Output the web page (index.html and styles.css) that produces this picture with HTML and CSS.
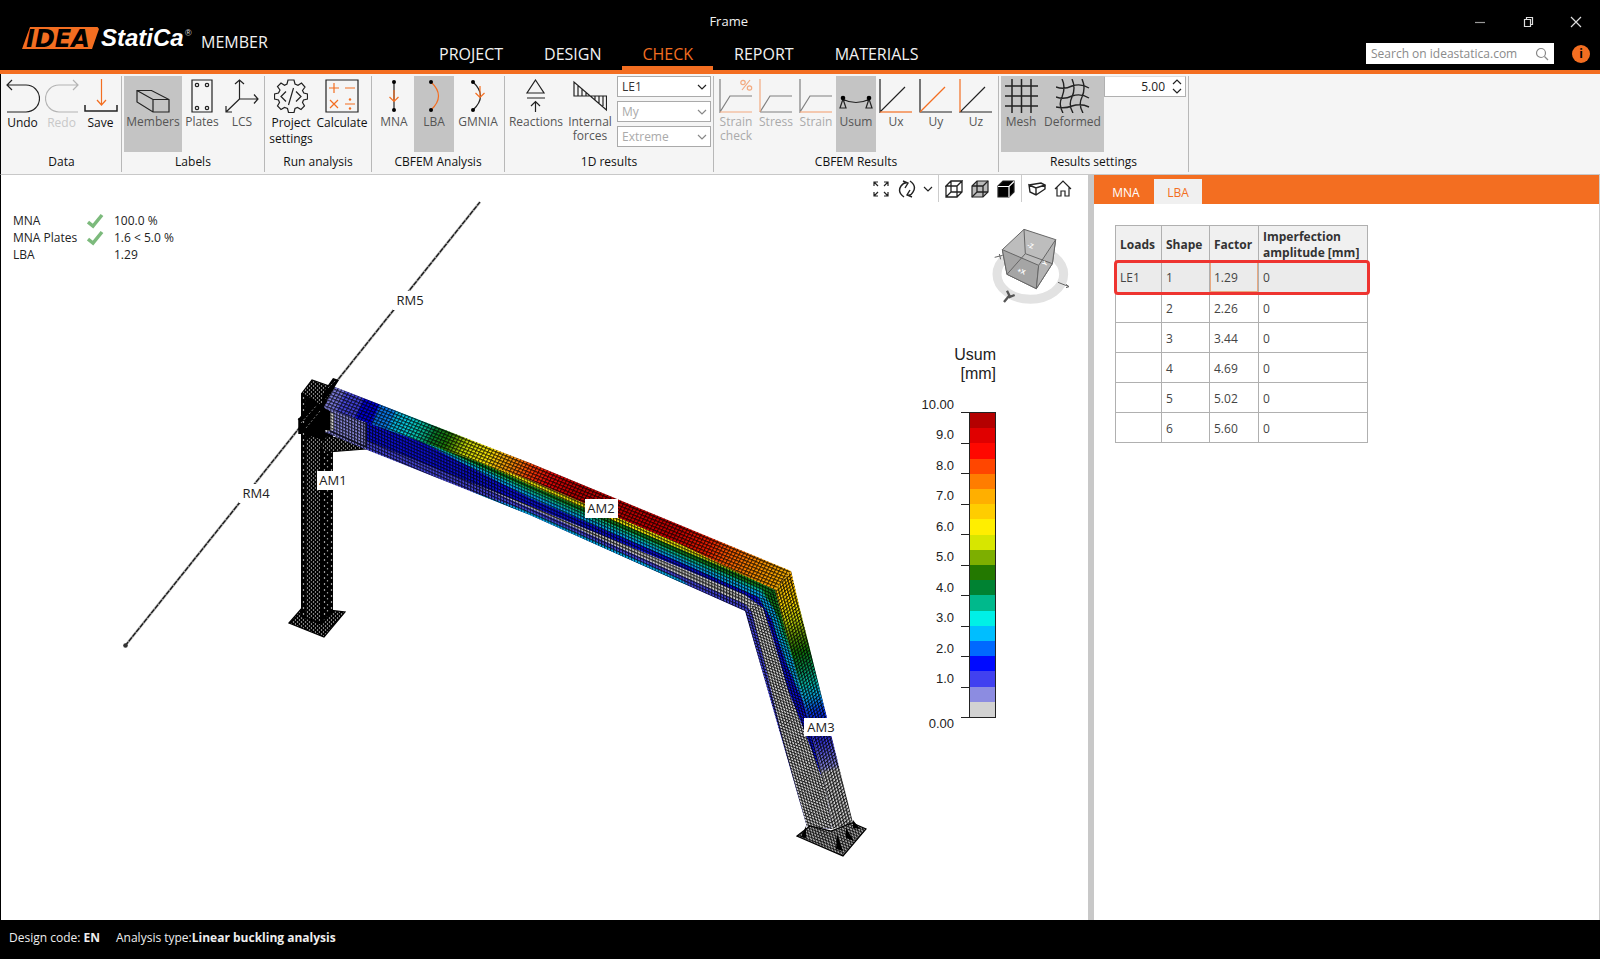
FILE: index.html
```html
<!DOCTYPE html>
<html lang="en">
<head>
<meta charset="utf-8">
<meta name="viewport" content="width=device-width, initial-scale=1">
<title>IDEA StatiCa Member - Frame</title>
<link rel="stylesheet" href="styles.css">
</head>
<body>
<div class="app">
  <header class="header">
    <div class="brand">
      <svg class="logo" width="172" height="26" viewBox="0 0 172 26" role="img" aria-label="IDEA StatiCa">
        <path class="logo-plate" d="M8 2H75.500L77 4L70 24H0Z"/>
        <text class="logo-idea" x="4" y="21.500">IDEA</text>
        <text class="logo-name" x="79" y="21">StatiCa</text>
        <text class="logo-reg" x="163" y="11">®</text>
      </svg>
      <span class="product">MEMBER</span>
    </div>
    <div class="header-mid">
      <div class="title">Frame</div>
      <nav class="menu">
        <a href="#project">PROJECT</a>
        <a href="#design">DESIGN</a>
        <a href="#check" class="active">CHECK</a>
        <a href="#report">REPORT</a>
        <a href="#materials">MATERIALS</a>
      </nav>
    </div>
    <div class="header-end">
      <div class="window-buttons">
        <button aria-label="Minimize"><svg width="12" height="12"><path d="M1 6.500H11" stroke="#999"/></svg></button>
        <button aria-label="Restore"><svg width="12" height="12"><path d="M2.500 3.500H8.500V10.500H2.500ZM4.500 3V1.500H10.500V8.500H9"/></svg></button>
        <button aria-label="Close"><svg width="12" height="12"><path d="M1 1L11 11M11 1L1 11"/></svg></button>
      </div>
      <div class="search-row">
        <label class="search">
          <input type="text" aria-label="Search" placeholder="Search on ideastatica.com">
          <svg width="14" height="14"><circle cx="6" cy="6" r="4.500"/><path d="M9.500 9.500L13 13"/></svg>
        </label>
        <button class="info" aria-label="Information">i</button>
      </div>
    </div>
  </header>

  <section class="ribbon">
    <div class="group">
      <div class="tools">
        <button class="tool w39 dark"><svg class="ic"><path d="M6 1L1 6L6 11M1 6H20A13.500 13.500 0 0 1 20 33H1"/></svg>Undo</button>
        <button class="tool w39 dark off" disabled><svg class="ic"><path d="M28 1L33 6L28 11M33 6H14A13.500 13.500 0 0 0 14 33H33"/></svg>Redo</button>
        <button class="tool w39 dark"><svg class="ic"><path class="or" d="M17.500 0V26M13 21L17.500 26L22 21"/><path d="M1 26V32H33V26" stroke-width="1.500"/></svg>Save</button>
      </div>
      <h2 class="low">Data</h2>
    </div>
    <div class="group">
      <div class="tools">
        <button class="tool w58 on"><svg class="ic"><path d="M1 11.500H15.500L33 20.500V33H17L1 23ZM1 11.500L17 20.500H33M17 20.500V33"/></svg>Members</button>
        <button class="tool w40"><svg class="ic"><path d="M7 1H27V33H7Z"/><circle cx="12" cy="6" r="1.700"/><circle cx="22" cy="6" r="1.700"/><circle cx="12" cy="29" r="1.700"/><circle cx="22" cy="29" r="1.700"/></svg>Plates</button>
        <button class="tool w40"><svg class="ic"><path d="M14.500 1V20H33M14.500 20L1 33M10 5L14.500 1L19 5M29 15.500L33 20L29 24.500M1 27V33H7"/></svg>LCS</button>
      </div>
      <h2>Labels</h2>
    </div>
    <div class="group">
      <div class="tools">
        <button class="tool w48 dark tall"><svg class="ic"><path d="M14 1H20L21 5L24 6.300L27.500 4L31 8L28.500 11.500L29.800 14L33.500 15V20L29.500 21L28.500 23.500L30.500 27L27 30.500L23.500 28.500L21 29.500L20 33.500H14.500L13.500 29.500L10.500 28.500L7 30.500L3.500 27L5.500 23.500L4.500 21L0.500 20V15L4.500 14L6 11L3.500 7.500L7 4L10.500 6.300L13 5Z"/><path d="M12 12.500L7 17.500L12 22.500M22 12.500L27 17.500L22 22.500M19.500 9L14.500 26"/></svg>Project settings</button>
        <button class="tool w54 dark"><svg class="ic"><path d="M1 1H33V33H1Z"/><path class="or" d="M4 9H14M9 4V14M20 9H30M5 21L13 29M13 21L5 29M20 25H30"/><circle class="of" cx="25" cy="20.500" r="1.200"/><circle class="of" cx="25" cy="29.500" r="1.200"/></svg>Calculate</button>
      </div>
      <h2>Run analysis</h2>
    </div>
    <div class="group">
      <div class="tools">
        <button class="tool w40"><svg class="ic"><path d="M17 3V31"/><circle class="bf" cx="17" cy="3" r="2"/><circle class="bf" cx="17" cy="31" r="2"/><path class="or" d="M17 11V22M12.500 18L17 22.500L21.500 18"/></svg>MNA</button>
        <button class="tool w40 on"><svg class="ic"><path class="or" d="M14 3Q29 17 14 31"/><circle class="bf" cx="14" cy="3" r="2"/><circle class="bf" cx="14" cy="31" r="2"/></svg>LBA</button>
        <button class="tool w48"><svg class="ic"><path d="M12 3Q27 17 12 31"/><circle class="bf" cx="12" cy="3" r="2"/><circle class="bf" cx="12" cy="31" r="2"/><path class="or" d="M19 7V18M14.500 14L19 18.500L23.500 14"/></svg>GMNIA</button>
      </div>
      <h2>CBFEM Analysis</h2>
    </div>
    <div class="group">
      <div class="tools">
        <button class="tool w58"><svg class="ic"><path d="M16.500 1L25 14H8ZM8 19H26M16.500 33V22.500M12 27L16.500 22.500L21 27"/></svg>Reactions</button>
        <button class="tool w50"><svg class="ic"><path d="M1 3V17H33.500V31L1 3ZM5 7V17M9 10V17M13 13V17M22 17V21M26 17V24M30 17V27"/></svg>Internal forces</button>
        <div class="selects">
          <label class="pick"><select aria-label="Load"><option>LE1</option></select><svg width="10" height="6"><path d="M1 1L5 5L9 1"/></svg></label>
          <label class="pick"><select aria-label="Component" disabled><option>My</option></select><svg width="10" height="6"><path d="M1 1L5 5L9 1"/></svg></label>
          <label class="pick"><select aria-label="Range" disabled><option>Extreme</option></select><svg width="10" height="6"><path d="M1 1L5 5L9 1"/></svg></label>
        </div>
      </div>
      <h2>1D results</h2>
    </div>
    <div class="group">
      <div class="tools">
        <button class="tool w40 dim" disabled><svg class="ic"><path d="M1 0V33L11 17H33"/><path class="or" d="M1 33H33M23 11L31 1"/><circle class="or" cx="24" cy="3.500" r="2.200"/><circle class="or" cx="30.500" cy="9" r="2.200"/></svg>Strain check</button>
        <button class="tool w40 dim" disabled><svg class="ic"><path d="M1 33H33M1 33L11 17H33"/><path class="or" d="M1 0V33"/></svg>Stress</button>
        <button class="tool w40 dim" disabled><svg class="ic"><path d="M1 0V33L11 17H33"/><path class="or" d="M1 33H33"/></svg>Strain</button>
        <button class="tool w40 on"><svg class="ic"><path d="M3 20Q17 27 31 20M4 20L1 29H7L4 20M30 20L27 29H33L30 20"/><circle class="bf" cx="4" cy="19" r="2.300"/><circle class="bf" cx="30" cy="19" r="2.300"/></svg>Usum</button>
        <button class="tool w40"><svg class="ic"><path d="M1 0V33L26 8"/><path class="or" d="M1 33H33"/></svg>Ux</button>
        <button class="tool w40"><svg class="ic"><path d="M1 0V33H33"/><path class="or" d="M1 33L26 8"/></svg>Uy</button>
        <button class="tool w40"><svg class="ic"><path d="M33 33H1L26 8"/><path class="or" d="M1 0V33"/></svg>Uz</button>
      </div>
      <h2>CBFEM Results</h2>
    </div>
    <div class="group">
      <div class="tools">
        <button class="tool w40 on"><svg class="ic"><path d="M8 0V34M17.500 0V34M27 0V34M1 7H34M1 17H34M1 27H34" stroke-width="1.500"/></svg>Mesh</button>
        <button class="tool w63 on"><svg class="ic"><path d="M6 0Q10 8 6 18Q2 26 7 34M16 0Q20 9 16 18Q12 26 17 34M26 0Q30 9 26 18Q22 26 27 34M0 8Q8 11 16 7Q25 4 33 9M0 18Q8 21 16 17Q25 14 33 19M0 28Q8 30 16 27Q25 24 33 28" stroke-width="1.400"/></svg>Deformed</button>
        <div class="spin">
          <input type="text" value="5.00" aria-label="Deformation scale">
          <div class="steps">
            <button aria-label="Increase"><svg width="10" height="6"><path d="M1 5L5 1L9 5"/></svg></button>
            <button aria-label="Decrease"><svg width="10" height="6"><path d="M1 1L5 5L9 1"/></svg></button>
          </div>
        </div>
      </div>
      <h2>Results settings</h2>
    </div>
  </section>

  <main class="work">
    <section class="canvas">
      <svg class="scene" aria-label="Deformed frame model">
        <defs>
          <linearGradient id="top" gradientUnits="userSpaceOnUse" x1="326" y1="395" x2="785" y2="583">
            <stop offset="0" stop-color="#8888e0"/><stop offset=".03" stop-color="#7070dc"/>
            <stop offset=".035" stop-color="#4a4ae0"/><stop offset=".07" stop-color="#4040dd"/>
            <stop offset=".075" stop-color="#0000dd"/><stop offset=".105" stop-color="#0000e0"/>
            <stop offset=".11" stop-color="#0a74f0"/><stop offset=".14" stop-color="#0a84f0"/>
            <stop offset=".145" stop-color="#08b8e8"/><stop offset=".175" stop-color="#08d0e0"/>
            <stop offset=".20" stop-color="#08c8b0"/><stop offset=".22" stop-color="#08a070"/>
            <stop offset=".23" stop-color="#088030"/><stop offset=".26" stop-color="#208008"/>
            <stop offset=".28" stop-color="#70a808"/><stop offset=".30" stop-color="#d0e008"/>
            <stop offset=".35" stop-color="#ffe808"/><stop offset=".38" stop-color="#ffb008"/>
            <stop offset=".41" stop-color="#ff8008"/><stop offset=".44" stop-color="#ff4008"/>
            <stop offset=".48" stop-color="#e80808"/><stop offset=".54" stop-color="#c00000"/>
            <stop offset=".76" stop-color="#c80000"/><stop offset=".83" stop-color="#f02000"/>
            <stop offset=".87" stop-color="#ff5800"/><stop offset=".93" stop-color="#ff8c00"/>
            <stop offset="1" stop-color="#ffb400"/>
          </linearGradient>
          <linearGradient id="side" gradientUnits="userSpaceOnUse" x1="783" y1="575" x2="840" y2="800">
            <stop offset="0" stop-color="#ffb000"/><stop offset=".12" stop-color="#ffd800"/>
            <stop offset=".2" stop-color="#c8d808"/><stop offset=".27" stop-color="#609808"/>
            <stop offset=".34" stop-color="#107808"/><stop offset=".41" stop-color="#089050"/>
            <stop offset=".48" stop-color="#08c0b0"/><stop offset=".54" stop-color="#08a8e8"/>
            <stop offset=".6" stop-color="#0840f0"/><stop offset=".68" stop-color="#1010e0"/>
            <stop offset=".76" stop-color="#4848e0"/><stop offset=".85" stop-color="#8c8ce4"/>
            <stop offset=".87" stop-color="#d0d0d0"/><stop offset="1" stop-color="#d0d0d0"/>
          </linearGradient>
          <pattern id="m1" width="3.600" height="3.200" patternUnits="userSpaceOnUse" patternTransform="matrix(.93 .38 -.5 .86 0 0)"><path d="M0 .5H3.600M.5 0V3.200" stroke="#000" stroke-opacity=".78"/></pattern>
          <pattern id="m2" width="3.200" height="3.200" patternUnits="userSpaceOnUse" patternTransform="matrix(.93 .41 0 1 0 0)"><path d="M0 .5H3.200M.5 0V3.200" stroke="#000" stroke-opacity=".78"/></pattern>
          <pattern id="m3" width="3.200" height="3.200" patternUnits="userSpaceOnUse" patternTransform="matrix(.26 .97 .93 .36 0 0)"><path d="M0 .5H3.200M.5 0V3.200" stroke="#000" stroke-width="1.200" stroke-opacity=".85"/></pattern>
          <pattern id="m4" width="3.200" height="3.200" patternUnits="userSpaceOnUse" patternTransform="matrix(.26 .97 .75 -.66 0 0)"><path d="M0 .5H3.200M.5 0V3.200" stroke="#000" stroke-width="1.200" stroke-opacity=".85"/></pattern>
          <pattern id="dots" width="4" height="4" patternUnits="userSpaceOnUse"><rect width="4" height="4"/><path d="M1.500 1V3M3.500 3V4M3.500 0V1" stroke="#808080"/></pattern>
          <pattern id="sparse" width="7" height="6" patternUnits="userSpaceOnUse"><rect width="7" height="6"/><path d="M2.500 1V3M5.500 4V5.500" stroke="#999"/></pattern>
        </defs>
        <g transform="translate(-1 -175)">
          <path d="M125 646L480 202" stroke="#aaa" stroke-width="2.500"/>
          <path d="M125 646L480 202" stroke="#111" stroke-width="1.200" stroke-dasharray="5 1"/>
          <circle cx="125.500" cy="645.500" r="2.300" fill="#333"/>
          <!-- left column AM1 -->
          <path d="M289 623L303 607L345 612L324 637Z" fill="url(#dots)" stroke="#000"/>
          <path d="M301 393L323 405L333 400V612L322 625L301 617Z" fill="#000"/>
          <path d="M301 393L306 395V616L301 614Z" fill="url(#sparse)"/>
          <path d="M306 440H320V622L306 617Z" fill="url(#dots)"/>
          <path d="M322 440H333V610L322 622Z" fill="url(#sparse)"/>
          <path d="M302 393L312 380L335 388L323 407Z" fill="url(#dots)" stroke="#000"/>
          <path d="M306 441L312 436L330 443L326 450Z" fill="url(#dots)"/>
          <path d="M326 436L366 443V449L328 452L320 449Z" fill="url(#dots)" stroke="#000" stroke-width="1"/>
          <!-- rafter AM2 web and bottom flange -->
          <path d="M325 405L530 480L680 544L775 590L779 605L793 660L808 720L827 793L832 829L807 827L745 611L680 582L530 515L365 449L325 432Z" fill="#4646de"/>
          <path d="M325 405L366 421V449L325 432Z" fill="#8888dc"/>
          <path d="M329 412L334 414V430L325 432Z" fill="#ddd"/>
          <path d="M470 482L530 505L680 567L745 594L768 606L792 673L813 740L827 793L832 829L807 827L783 740L767 673L752 612L745 604L680 575L560 521Z" fill="#d0d0d0"/>
          <path d="M366 420L530 480L680 544L775 590L793 660L808 720L822 778L806 735L788 690L772 635L763 608L745 595L680 567L530 506L366 440Z" fill="#0c10d8"/>
          <path d="M410 436L530 480L680 544L775 590L793 660L803 702L785 660L771 618L758 597L680 562L530 498Z" fill="#08a8ec"/>
          <path d="M425 442L530 480L680 544L775 590L793 660L780 632L774 608L760 592L680 558L530 493Z" fill="#08b898"/>
          <path d="M435 446L530 480L680 544L775 590L790 648L779 618L762 589L680 554L530 489Z" fill="#108020"/>
          <path d="M470 458L530 480L680 544L772 588L680 549L530 485Z" fill="#f0e808"/>
          <path d="M470 491L530 515L680 582L690 586L680 579L530 512Z" fill="#08b0ec"/>
          <path d="M325 405L530 480L680 544L775 590L745 611L680 582L530 515L365 449L325 432Z" fill="url(#m2)"/>
          <path d="M775 590L779 605L793 660L808 720L827 793L832 829L807 827L745 611Z" fill="url(#m3)"/>
          <path d="M366 440L530 506L745 600" fill="none" stroke="#000" stroke-opacity=".35"/>
          <path d="M366 421V447M330 431L366 447" fill="none" stroke="#112" stroke-width="1.500"/>
          <!-- top flange -->
          <path d="M335 387L530 463L791 571L775 590L680 544L530 480L323 407Z" fill="url(#top)"/>
          <path d="M335 387L530 463L791 571L775 590L680 544L530 480L323 407Z" fill="url(#m1)"/>
          <!-- right column AM3 outer flange -->
          <path d="M791 571L799 605L853 823L832 829L827 793L808 720L793 660L779 605L775 590Z" fill="url(#side)"/>
          <path d="M791 571L799 605L853 823L832 829L827 793L808 720L793 660L779 605L775 590Z" fill="url(#m4)"/>
          <path d="M797 836L810 826L831 831L852 823L866 829L843 856Z" fill="#aaa"/>
          <path d="M797 836L810 826L831 831L852 823L866 829L843 856Z" fill="url(#m3)" stroke="#000"/>
          <path d="M806 826V838L801 837ZM837 834L843 851L836 849ZM846 828L854 841L846 838ZM853 820L860 829L853 828Z"/>
          <!-- joint between purlin and column -->
          <path d="M326 388L333 378L339 380L331 393L324 400L324 408L330 411V430H322V398Z" fill="#000"/>
          <path d="M299 421L316 401M301 430L320 408M304 433L326 400M300 418V434" stroke="#000" stroke-width="3.500"/>
          <path d="M301 423L317 405M306 428L320 411M328 388L336 380" stroke="#777" stroke-width="1" stroke-dasharray="2 2"/>
          <!-- member labels -->
          <g class="tags">
            <rect x="239" y="484" width="34" height="19"/><text x="256" y="498">RM4</text>
            <rect x="393" y="291" width="34" height="19"/><text x="410" y="305">RM5</text>
            <rect x="317" y="471" width="32" height="19"/><text x="333" y="485">AM1</text>
            <rect x="585" y="499" width="33" height="19"/><text x="601" y="513">AM2</text>
            <rect x="804" y="718" width="33" height="18"/><text x="821" y="732">AM3</text>
          </g>
        </g>
      </svg>

      <div class="summary">
        <span>MNA</span><svg width="17" height="16"><path d="M1 9L6 13L15 2"/></svg><span>100.0 %</span>
        <span>MNA Plates</span><svg width="17" height="16"><path d="M1 9L6 13L15 2"/></svg><span>1.6 &lt; 5.0 %</span>
        <span>LBA</span><i></i><span>1.29</span>
      </div>

      <div class="side">
        <div class="viewbar">
          <button aria-label="Zoom to fit"><svg width="18" height="18"><path d="M2 6V2H6M2 2L6 6M12 2H16V6M16 2L12 6M2 12V16H6M2 16L6 12M16 12V16H12M16 16L12 12" stroke-width="1.200"/></svg></button>
          <button aria-label="Rotate"><svg width="18" height="18"><path d="M6 17Q-1 12 3 6Q6 2 10 3M5 1L10 3L7 8M12 1Q19 6 15 12Q13 16 9 15M12 10L9 15L14 17" stroke-width="1.400"/></svg></button>
          <button class="narrow" aria-label="Rotation options"><svg width="10" height="6"><path d="M1 1L5 5L9 1"/></svg></button>
          <hr>
          <button aria-label="Wireframe"><svg width="18" height="18"><path d="M1 6L6 1H17L12 6ZM1 6V17H12V6M12 17L17 12V1M6 1V12H17M6 12L1 17" stroke-width="1.300"/></svg></button>
          <button aria-label="Transparent"><svg width="18" height="18"><path d="M1 6L6 1H17V12L12 17H1Z" fill="#bbb"/><path d="M1 6H12V17M12 6L17 1M6 1V12H17M6 12L1 17" stroke-width="1.300"/></svg></button>
          <button aria-label="Solid"><svg width="18" height="18"><path d="M1 6L6 1H17V12L12 17H1Z" fill="#000"/><path d="M1 6.500H12L17 1.500M12 6.500V17" stroke="#fff"/></svg></button>
          <hr>
          <button aria-label="Perspective"><svg width="18" height="18"><path d="M1 5L13 3L17 5L8 8L1 5L2 12L8 15L17 9V5M8 8V15" stroke-width="1.400"/></svg></button>
          <button aria-label="Home view"><svg width="18" height="18"><path d="M1 9L9 1L17 9M3 7V16H7V11H11V16H15V7"/></svg></button>
        </div>
        <svg class="navcube" width="80" height="80" viewBox="390 170 240 240" role="img" aria-label="View cube">
          <ellipse cx="511" cy="315" rx="100" ry="75" fill="none" stroke="#e2e2e2" stroke-width="27"/>
          <g stroke="#666" stroke-width="3" stroke-linejoin="round">
            <path d="M427 241L492 180L587 211L577 283L529 358L441 315Z" fill="#bdbdbd"/>
            <path d="M427 241L536 288L529 358L441 315Z" fill="#a5a5a5"/>
            <path d="M536 288L587 211L577 283L529 358Z" fill="#b4b4b4"/>
            <path d="M492 180L496 253L577 283M496 253L441 315" fill="none"/>
          </g>
          <g class="faces">
            <text transform="translate(500 232) rotate(20)">-Z</text>
            <text transform="translate(470 308) rotate(20)">+X</text>
            <text transform="translate(556 292) rotate(-50)">Y</text>
          </g>
          <path d="M404 264L428 258M418 254L422 270M594 339L627 352M618 345L627 352L618 355" stroke="#666" stroke-width="3" fill="none"/>
          <path d="M432 398L450 376M441 364L450 382M464 377L446 384" stroke="#555" stroke-width="7"/>
        </svg>
        <div class="legend">
          <div class="legend-title">Usum<br>[mm]</div>
          <div class="scale">
            <ol class="values">
              <li>10.00</li><li>9.0</li><li>8.0</li><li>7.0</li><li>6.0</li><li>5.0</li><li>4.0</li><li>3.0</li><li>2.0</li><li>1.0</li><li>0.00</li>
            </ol>
            <div class="ticks"><i></i><i></i><i></i><i></i><i></i><i></i><i></i><i></i><i></i><i></i></div>
            <div class="bar"></div>
          </div>
        </div>
      </div>
    </section>

    <div class="splitter"></div>

    <aside class="panel">
      <div class="tabs" role="tablist">
        <button role="tab">MNA</button>
        <button role="tab" aria-selected="true">LBA</button>
      </div>
      <table>
        <colgroup><col class="c1"><col class="c2"><col class="c3"><col class="c4"></colgroup>
        <thead><tr><th>Loads</th><th>Shape</th><th>Factor</th><th>Imperfection<br>amplitude [mm]</th></tr></thead>
        <tbody>
          <tr class="picked"><td>LE1</td><td>1</td><td class="cell">1.29</td><td>0</td></tr>
          <tr><td></td><td>2</td><td>2.26</td><td>0</td></tr>
          <tr><td></td><td>3</td><td>3.44</td><td>0</td></tr>
          <tr><td></td><td>4</td><td>4.69</td><td>0</td></tr>
          <tr><td></td><td>5</td><td>5.02</td><td>0</td></tr>
          <tr><td></td><td>6</td><td>5.60</td><td>0</td></tr>
        </tbody>
      </table>
    </aside>
  </main>

  <footer class="status">
    <span>Design code: <b>EN</b></span>
    <span>Analysis type:<b>Linear buckling analysis</b></span>
  </footer>
</div>
</body>
</html>
```
FILE: styles.css
```css
* { box-sizing: border-box; }
body {
  margin: 0;
  font: 12px/16px "Open Sans", "Noto Sans", sans-serif;
  color: #222;
}
button, input, select { font: inherit; color: inherit; border: 0; padding: 0; margin: 0; background: none; }
svg { fill: none; stroke: #222; stroke-width: 1.2; flex: none; }
h2, ol { margin: 0; padding: 0; }
.app { display: flex; flex-direction: column; min-height: 100vh; }

/* header */
.header {
  display: flex;
  height: 74px;
  background: #000;
  color: #f2f2f2;
  border-bottom: 4px solid #f36e21;
}
.brand { width: 419px; display: flex; align-items: flex-start; gap: 7px; padding: 25px 0 0 22px; }
.logo text, .logo path { stroke: none; }
.logo .logo-plate { fill: #f36e21; }
.logo .logo-idea { font: italic bold 24px "DejaVu Sans", sans-serif; fill: #000; }
.logo .logo-name { font: italic bold 24px "Liberation Sans", sans-serif; fill: #fff; }
.logo .logo-reg { font: 9px "Liberation Sans", sans-serif; fill: #ddd; }
.product { font-size: 16px; line-height: 34px; }
.header-mid { display: flex; flex-direction: column; }
.title { font-size: 13px; line-height: 42px; padding-left: 100px; text-align: center; }
.menu { display: flex; gap: 1px; font-size: 16px; line-height: 24px; }
.menu a { color: inherit; text-decoration: none; padding: 0 20px; height: 28px; border-bottom: 4px solid transparent; }
.menu .active { color: #f36e21; border-color: #f36e21; }
.header-end { margin-left: auto; display: flex; flex-direction: column; }
.window-buttons { display: flex; justify-content: flex-end; gap: 36px; height: 43px; padding-right: 18px; align-items: center; }
.window-buttons svg { stroke: #ddd; display: block; }
.search-row { display: flex; gap: 18px; padding-right: 10px; align-items: center; }
.search { display: flex; align-items: center; width: 188px; height: 21px; padding: 0 5px; background: #fff; }
.search input { flex: 1; min-width: 0; outline: 0; }
.search input::placeholder { color: #8a8a8a; opacity: 1; }
.search svg { stroke: #888; }
.info { width: 18px; height: 18px; border-radius: 50%; background: #f36e21; color: #000; font-weight: bold; line-height: 18px; text-align: center; }

/* ribbon */
.ribbon { display: flex; height: 101px; padding: 2px 0; background: #f5f5f5; border-left: 1px solid #000; border-bottom: 1px solid #c8c8c8; }
.group { display: flex; flex-direction: column; padding: 0 2px; border-right: 1px solid #b8b8b8; }
.group:first-child { padding: 0 1px 0 2px; }
.tools { display: flex; height: 77px; }
.group h2 { font-size: 12px; font-weight: 400; line-height: 20px; text-align: center; color: #111; }
.group .low { padding-top: 2px; }
.tool { display: flex; flex-direction: column; align-items: center; padding-top: 3px; line-height: 14px; color: #555; }
.ic { width: 34px; height: 34px; margin-bottom: 2px; }
.tool.dark { color: #111; line-height: 16px; }
.tool.on { background: #c4c4c4; }
.tool.off { color: #c8c8c8; }
.tool.off svg { stroke: #b4b4b4; }
.tool.dim { color: #aaa; }
.tool.dim svg { opacity: .55; }
.w39 { width: 39px; } .w40 { width: 40px; } .w48 { width: 48px; } .w50 { width: 50px; }
.w54 { width: 54px; } .w58 { width: 58px; } .w63 { width: 63px; }
.or { stroke: #f36e21; }
.of { fill: #f36e21; stroke: none; }
.bf { fill: #000; stroke: none; }
.selects { display: flex; flex-direction: column; gap: 4px; padding: 0 0 0 2px; }
.pick { display: grid; align-items: center; width: 94px; height: 21px; border: 1px solid #aaa; background: #fff; color: #333; }
.pick select { grid-area: 1 / 1; appearance: none; width: 100%; padding-left: 4px; opacity: 1; }
.pick svg { grid-area: 1 / 1; justify-self: end; margin-right: 3px; pointer-events: none; }
.pick select:disabled { color: #aaa; }
.pick select:disabled + svg { stroke: #888; }
.spin { display: flex; width: 82px; height: 21px; border: 1px solid #b0b0b0; border-top-color: #ddd; background: #fff; }
.spin input { flex: 1; min-width: 0; text-align: right; }
.steps { display: flex; flex-direction: column; justify-content: space-evenly; width: 20px; padding-left: 4px; align-items: center; }
.steps svg { display: block; }

/* workspace */
.work { flex: 1; display: grid; grid-template-columns: minmax(0, 1fr) 6px 506px; border-left: 1px solid #000; }
.canvas { position: relative; display: flex; justify-content: space-between; background: #fff; }
.scene { position: absolute; inset: 0; width: 100%; height: 100%; fill: #000; stroke: none; }
.tags rect { fill: #fff; }
.tags text { fill: #222; font-size: 13px; text-anchor: middle; }
.summary { position: relative; display: grid; grid-template-columns: 64px 17px auto; column-gap: 10px; align-content: start; grid-auto-rows: 17px; padding: 38px 0 0 12px; white-space: nowrap; }
.summary svg { stroke: #7cba7c; stroke-width: 3.5; }
.side { position: relative; display: flex; flex-direction: column; align-items: flex-end; }
.viewbar { display: flex; align-items: center; height: 27px; padding-right: 12px; }
.viewbar button { width: 26px; display: grid; place-items: center; }
.viewbar .narrow { width: 16px; }
.viewbar hr { width: 1px; height: 27px; margin: 0 2px; border: 0; background: #ccc; }
.navcube { margin: 24px 18px 0 0; }
.faces { fill: #fff; stroke: none; font: bold 20px "Liberation Sans", sans-serif; }
.legend { padding: 39px 92px 0 0; font-family: "Liberation Sans", Arial, sans-serif; }
.legend-title { font-size: 16px; line-height: 19px; text-align: right; }
.scale { display: flex; justify-content: flex-end; padding-top: 29px; }
.values { list-style: none; font-size: 13px; text-align: right; margin-top: -15px; padding-right: 7px; }
.values li { height: 30px; line-height: 16px; }
.values li:nth-child(even) { height: 31px; }
.values li:last-child { padding-top: 14px; }
.ticks { display: flex; flex-direction: column; justify-content: space-between; width: 8px; height: 306px; border-bottom: 1px solid #222; }
.ticks i { flex: 1; border-top: 1px solid #222; }
.bar {
  width: 27px; height: 306px; border: 1px solid #222;
  background: linear-gradient(#b40000 5%, #e00000 5% 10%, #ff0800 10% 15%, #ff4600 15% 20%, #ff7d00 20% 25%, #ffaf00 25% 30%, #ffcd00 30% 35%, #ffee00 35% 40%, #d7e600 40% 45%, #7daf00 45% 50%, #237800 50% 55%, #008232 55% 60%, #00b98c 60% 65%, #00f0e6 65% 70%, #00beff 70% 75%, #0069ff 75% 80%, #000aff 80% 85%, #4141f0 85% 90%, #8c8ce1 90% 95%, #d2d2d2 95%);
}
.splitter { background: #c8c8c8; }

/* results panel */
.panel { background: #fff; border-right: 1px solid #ccc; }
.tabs { display: flex; align-items: flex-end; height: 29px; background: #f36e21; padding-left: 4px; }
.tabs button { width: 56px; height: 25px; padding-top: 2px; color: #fff; }
.tabs [aria-selected] { width: 48px; background: #f0f0f0; color: #f36e21; }
table { margin: 21px 0 0 21px; width: 253px; table-layout: fixed; border-collapse: collapse; border: 1px solid #aaa; color: #444; }
.c1 { width: 46px; } .c2 { width: 48px; } .c3 { width: 49px; } .c4 { width: 109px; }
th, td { border: 1px solid #b0b0b0; padding: 2px 0 0 4px; text-align: left; white-space: nowrap; }
th { height: 36px; background: #f0f0f0; color: #333; font-weight: 700; }
td { height: 30px; }
.picked td { background: #ebebeb; height: 31px; }
.picked { outline: 3px solid #ee3430; outline-offset: -1px; border-radius: 2px; }
.picked .cell { box-shadow: inset 0 0 0 1px #e8a880; }

.status { display: flex; gap: 16px; height: 39px; align-items: center; padding: 0 9px 4px; background: #000; color: #eee; }
```
